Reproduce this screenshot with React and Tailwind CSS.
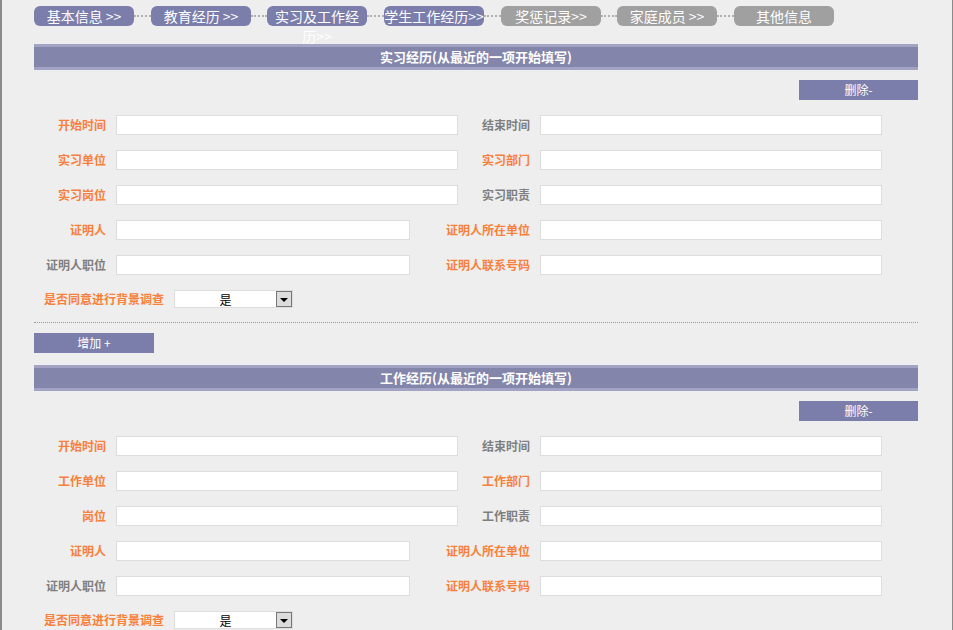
import React from 'react';

const tabs = [
	{ label: '基本信息 >>', done: true },
	{ label: '教育经历 >>', done: true },
	{ label: '实习及工作经', extra: '历>>', done: true },
	{ label: '学生工作经历>>', done: true },
	{ label: '奖惩记录>>', done: false },
	{ label: '家庭成员 >>', done: false },
	{ label: '其他信息', done: false },
];

// widths of the dotted links between the steps
const links = ['w-[17px]', 'w-[16px]', 'w-[17px]', 'w-[17px]', 'w-[16px]', 'w-[17px]'];

const ORANGE = 'text-[#f8803a]';
const GRAY = 'text-[#7f7f7f]';

const sections = [
	{
		title: '实习经历(从最近的一项开始填写)',
		rows: [
			[['开始时间', true], ['结束时间', false], false],
			[['实习单位', true], ['实习部门', true], false],
			[['实习岗位', true], ['实习职责', false], false],
			[['证明人', true], ['证明人所在单位', true], true],
			[['证明人职位', false], ['证明人联系号码', true], true],
		],
		addButton: true,
	},
	{
		title: '工作经历(从最近的一项开始填写)',
		rows: [
			[['开始时间', true], ['结束时间', false], false],
			[['工作单位', true], ['工作部门', true], false],
			[['岗位', true], ['工作职责', false], false],
			[['证明人', true], ['证明人所在单位', true], true],
			[['证明人职位', false], ['证明人联系号码', true], true],
		],
		addButton: false,
	},
];

const Label = ({ text, required }) => (
	<div className={`w-[72px] flex justify-end whitespace-nowrap text-[12px] font-bold leading-[20px] ${required ? ORANGE : GRAY}`}>
		{text}
	</div>
);

const Field = ({ short }) => (
	<div className={`ml-[10px] h-[20px] bg-white border border-[#dddddd] ${short ? 'w-[294px]' : 'w-[342px]'}`} />
);

const SectionHeader = ({ title }) => (
	<div className="bg-[#a3a4c5] py-[3px]">
		<div className="h-[20px] bg-[#8385ab] flex items-center justify-center text-white text-[13px] font-bold">
			{title}
		</div>
	</div>
);

const SelectBox = () => (
	<div className="ml-[10px] w-[119px] h-[18px] bg-white border border-[#dddddd] flex">
		<div className="flex-1 text-center text-[12px] leading-[12px] pt-[3px] text-black">是</div>
		<div className="w-[16px] h-[16px] border border-[#777777] bg-[#dcdcdc] flex items-center justify-center">
			<div className="w-0 h-0 border-l-[4px] border-r-[4px] border-t-[4px] border-l-transparent border-r-transparent border-t-black mt-[2px]" />
		</div>
	</div>
);

const Section = ({ section }) => (
	<div>
		<SectionHeader title={section.title} />
		<div className="flex justify-end mt-[10px]">
			<button className="w-[119px] h-[20px] bg-[#7b7dab] text-white text-[12px] leading-[20px]">删除-</button>
		</div>
		<div className="mt-[15px] flex flex-col gap-[15px]">
			{section.rows.map(([l, r, short], i) => (
				<div key={i} className="flex items-center">
					<Label text={l[0]} required={l[1]} />
					<Field short={short} />
					{short && <div className="w-[48px]" />}
					<Label text={r[0]} required={r[1]} />
					<Field />
				</div>
			))}
			<div className="flex items-center pl-[10px]">
				<div className={`text-[12px] font-bold whitespace-nowrap ${ORANGE}`}>是否同意进行背景调查</div>
				<SelectBox />
			</div>
		</div>
		{section.addButton && (
			<>
				<div className="mt-[14px] border-t border-dotted border-[#9a9a9a]" />
				<button className="mt-[10px] w-[120px] h-[20px] bg-[#7b7dab] text-white text-[12px] leading-[20px] block">增加 +</button>
			</>
		)}
	</div>
);

export default function App() {
	return (
		<div
			className="w-[953px] h-[630px] overflow-hidden bg-[#eeeeee] border-l-2 border-r border-[#8a8a8a]"
			style={{ fontFamily: '"Noto Sans CJK SC", "Noto Sans", sans-serif' }}
		>
			<div className="pl-[32px] w-[916px]">
				{/* Steps */}
				<div className="flex items-start pt-[6px]">
					{tabs.map((t, i) => (
						<React.Fragment key={i}>
							{i > 0 && <div className={`${links[i - 1]} mt-[9px] border-t-2 border-dotted border-[#b0b0b0]`} />}
							<div
								className={`w-[100px] h-[20px] rounded-[6px] text-white text-[14px] leading-[20px] text-center whitespace-nowrap overflow-visible ${t.done ? 'bg-[#7b7dab]' : 'bg-[#a0a0a0]'}`}
							>
								{t.label}
								{t.extra && (
									<>
										<br />
										{t.extra}
									</>
								)}
							</div>
						</React.Fragment>
					))}
				</div>

				<div className="mt-[18px]">
					<Section section={sections[0]} />
				</div>
				<div className="mt-[12px]">
					<Section section={sections[1]} />
				</div>
			</div>
		</div>
	);
}
